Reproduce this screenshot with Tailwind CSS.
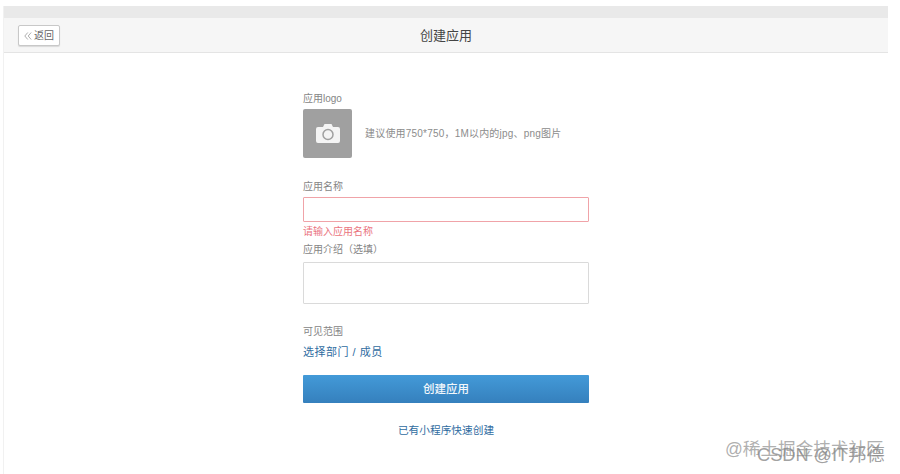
<!DOCTYPE html>
<html lang="zh-CN">
<head>
    <meta charset="UTF-8">
    <title>创建应用</title>
    <script src="https://cdn.jsdelivr.net/npm/@tailwindcss/browser@4"></script>
</head>
<body class="bg-white w-[900px] h-[474px] overflow-hidden relative font-['Liberation_Sans','Noto_Sans_CJK_SC',sans-serif] text-[10px] text-[#858585]">
    <div class="ml-[3px] mt-[6px] w-[885px] h-[468px] border-l border-[#f1f1f1]">
        <div class="h-[12px] bg-[#e9e9e9]"></div>
        <header class="h-[35px] bg-[#f6f6f6] border-b border-[#e4e4e4] flex items-center justify-center relative">
            <button class="absolute left-[14px] top-[7px] w-[42px] h-[21px] bg-white border border-[#c8c8c8] rounded-[2px] shadow-[0_1px_1px_rgba(0,0,0,0.12)] flex items-center justify-center gap-[2px] text-[10px] leading-none text-[#666]">
                <svg width="8" height="8" viewBox="0 0 8 8" fill="none" stroke="#999" stroke-width="0.8">
                    <path d="M3.8 0.5L0.8 4l3 3.5M7.2 0.5L4.2 4l3 3.5"/>
                </svg>
                返回
            </button>
            <h1 class="text-[13px] text-[#444] mt-[2px]">创建应用</h1>
        </header>

        <main class="w-[286px] ml-[299px] flex flex-col">
            <label class="mt-[39px] h-[14px] leading-[14px]">应用logo</label>
            <div class="mt-[3px] flex items-center gap-[13px]">
                <div class="w-[49px] h-[49px] bg-[#a0a0a0] rounded-[2px] flex items-center justify-center">
                    <svg width="24" height="19" viewBox="0 0 24 19">
                        <path d="M2 3h5l1.5-3h7L17 3h5a2 2 0 0 1 2 2v12a2 2 0 0 1-2 2H2a2 2 0 0 1-2-2V5a2 2 0 0 1 2-2z" fill="#f4f4f4"/>
                        <circle cx="12" cy="10.5" r="5" fill="none" stroke="#a0a0a0" stroke-width="1.5"/>
                    </svg>
                </div>
                <span class="text-[#8c8c8c] tracking-[0.2px]">建议使用750*750，1M以内的jpg、png图片</span>
            </div>

            <label class="mt-[22px] h-[14px] leading-[14px]">应用名称</label>
            <input class="mt-[3px] h-[25px] w-full bg-white border border-[#f0a3a8] rounded-[1px]">
            <p class="mt-[3px] h-[14px] leading-[14px] text-[#ea7480]">请输入应用名称</p>
            <label class="mt-[4px] h-[14px] leading-[14px]">应用介绍（选填）</label>
            <textarea class="mt-[5px] h-[42px] w-full bg-white border border-[#dadada] rounded-[1px] resize-none"></textarea>

            <label class="mt-[21px] h-[14px] leading-[14px]">可见范围</label>
            <a class="mt-[5px] h-[16px] leading-[16px] text-[11px] tracking-[0.5px] text-[#2f6c9f]">选择部门 / 成员</a>
            <button class="mt-[15px] h-[28px] pt-[2px] w-full bg-gradient-to-b from-[#439ad8] to-[#3580bd] rounded-[1px] text-[#f2f7fb] text-[11.5px] font-medium">创建应用</button>
            <a class="mt-[19px] h-[16px] leading-[16px] text-center text-[#2f6c9f] text-[10.7px]">已有小程序快速创建</a>
        </main>
    </div>

    <div class="absolute left-[725px] top-[438px] text-[17.6px] leading-[22px] text-[#9a9a9a]/80">@稀土掘金技术社区</div>
    <div class="absolute left-[757px] top-[444px] text-[18.2px] leading-[22px] text-[#888]/80">CSDN @IT邦德</div>
</body>
</html>
